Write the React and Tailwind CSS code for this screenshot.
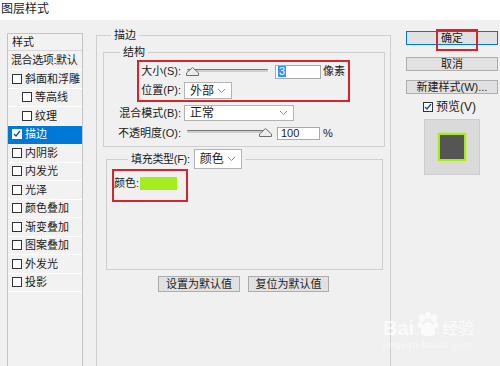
import React from "react";

// Photoshop "图层样式" dialog, 描边 (stroke) page.

const left = [
  { t: "斜面和浮雕", ind: false },
  { t: "等高线", ind: true },
  { t: "纹理", ind: true },
  { t: "描边", sel: true },
  { t: "内阴影" },
  { t: "内发光" },
  { t: "光泽" },
  { t: "颜色叠加" },
  { t: "渐变叠加" },
  { t: "图案叠加" },
  { t: "外发光" },
  { t: "投影" },
];

function Check({ on, light }) {
  return (
    <span
      className={
        "flex h-[10px] w-[10px] shrink-0 items-center justify-center border " +
        (light ? "border-white bg-white" : "border-[#333] bg-white")
      }
    >
      {on && (
        <svg width="8" height="8" viewBox="0 0 8 8">
          <polyline points="1,4 3,6 7,1" fill="none" stroke="#0a4f9e" strokeWidth="1.3" />
        </svg>
      )}
    </span>
  );
}

function Chevron() {
  return (
    <svg width="9" height="6" viewBox="0 0 9 6" className="shrink-0">
      <polyline points="1,1 4.5,4.5 8,1" fill="none" stroke="#8a8a8a" strokeWidth="1" />
    </svg>
  );
}

function Select({ w, h, text }) {
  return (
    <div
      className="flex items-center justify-between border border-[#b4b4b4] bg-white pl-[5px] pr-[5px]"
      style={{ width: w, height: h }}
    >
      <span className="text-[12px] leading-none">{text}</span>
      <Chevron />
    </div>
  );
}

function Slider({ at }) {
  // at: "start" | "end"
  return (
    <div className="relative h-full w-[88px] shrink-0">
      <div className="absolute left-[3px] right-[4px] top-[6px] h-[3px] rounded-[1px] border-t border-[#777] bg-[#cfcfcf]" />
      <svg
        width="13"
        height="9"
        viewBox="0 0 13 9"
        className={"absolute top-[4px] " + (at === "start" ? "left-[2px]" : "right-[0px]")}
      >
        <polygon points="0.5,8.5 0.5,6 6.5,0.5 12.5,6 12.5,8.5" fill="#ececec" stroke="#6d6d6d" />
      </svg>
    </div>
  );
}

function Btn({ children, w, primary }) {
  return (
    <div
      className={
        "flex h-[16px] items-center justify-center whitespace-nowrap border bg-[#e1e1e1] text-[11px] leading-none " +
        (primary ? "border-[#0078d7]" : "border-[#adadad]")
      }
      style={{ width: w }}
    >
      {children}
    </div>
  );
}

export default function App() {
  return (
    <div className="relative flex h-[366px] w-[500px] flex-col overflow-hidden whitespace-nowrap bg-[#f0f0f0] font-['Liberation_Sans','Noto_Sans_CJK_SC',sans-serif] text-[11px] text-[#1b1b1b]">
      <div className="h-[20px] shrink-0 bg-white pl-[1px] text-[12px] leading-[18px]">图层样式</div>

      <div className="flex min-h-0 flex-1">
        {/* style list */}
        <div className="ml-[7px] mt-[13px] h-[400px] w-[76px] shrink-0 overflow-hidden border border-[#c4c4c4] bg-[#f2f2f2]">
          <div className="flex h-[17px] items-center border-b border-[#d8d8d8] pl-[4px]">样式</div>
          <div className="flex h-[19px] items-center border-b border-white pl-[3px] tracking-[-0.4px]">混合选项:默认</div>
          {left.map((r) => (
            <div
              key={r.t}
              className={
                "flex h-[18.5px] items-center gap-[3px] border-b " +
                (r.sel ? "border-[#0078d7] bg-[#0078d7] text-white" : "border-white") +
                (r.ind ? " pl-[14px]" : " pl-[4px]")
              }
            >
              <Check on={r.sel} light={r.sel} />
              <span>{r.t}</span>
            </div>
          ))}
        </div>

        {/* main stroke group */}
        <fieldset className="ml-[13px] mt-[8px] h-[400px] w-[295px] shrink-0 border border-[#cfcfcf]">
          <legend className="ml-[14px] px-[3px] text-[11px] leading-[14px]">描边</legend>

          <fieldset className="ml-[6px] mr-[5px] mt-[3px] border border-[#cfcfcf] pb-[3px]">
            <legend className="ml-[16px] px-[3px] leading-[14px]">结构</legend>

            <div className="ml-[33px] mt-[1px] w-[213px] border-2 border-[#d2262e]">
              <div className="flex h-[19px] items-center">
                <span className="w-[42px] text-right">大小(S):</span>
                <div className="ml-[3px] h-full pt-[1px]">
                  <Slider at="start" />
                </div>
                <div className="ml-[3px] flex h-[14px] w-[46px] items-center border border-[#a9a9a9] bg-white pl-[2px]">
                  <span className="bg-[#3390ff] px-[1px] leading-[11px] text-white">3</span>
                </div>
                <span className="ml-[2px]">像素</span>
              </div>
              <div className="flex h-[19px] items-center">
                <span className="w-[42px] text-right">位置(P):</span>
                <div className="ml-[3px]">
                  <Select w={48} h={17} text="外部" />
                </div>
              </div>
            </div>

            <div className="mt-[1px] flex h-[20px] items-center">
              <span className="w-[77px] text-right">混合模式(B):</span>
              <div className="ml-[3px]">
                <Select w={110} h={16} text="正常" />
              </div>
            </div>
            <div className="flex h-[20px] items-center">
              <span className="w-[77px] text-right">不透明度(O):</span>
              <div className="ml-[3px] -mt-[4px] h-[14px]">
                <Slider at="end" />
              </div>
              <div className="ml-[5px] flex h-[13px] w-[43px] items-center border border-[#a9a9a9] bg-white pl-[3px]">
                100
              </div>
              <span className="ml-[3px]">%</span>
            </div>
          </fieldset>

          <fieldset className="ml-[9px] mr-[7px] mt-[2px] h-[121px] border border-[#cfcfcf]">
            <legend className="ml-[21px] px-[3px]">
              <div className="flex items-center">
                <span className="tracking-[-0.3px]">填充类型(F):</span>
                <div className="ml-[4px]">
                  <Select w={48} h={20} text="颜色" />
                </div>
              </div>
            </legend>
            <div className="ml-[5px] flex h-[33px] w-[76px] items-start border-2 border-[#d2262e] pt-[5px]">
              <span className="leading-[14px]">颜色:</span>
              <span className="ml-[1px] mt-[1px] h-[13px] w-[37px] bg-[#a3ec1d]" />
            </div>
          </fieldset>

          <div className="mt-[6px] flex justify-center gap-[8px]">
            <Btn w={82}>设置为默认值</Btn>
            <Btn w={81}>复位为默认值</Btn>
          </div>
        </fieldset>

        {/* right column */}
        <div className="ml-[15px] mt-[11px] flex w-[92px] shrink-0 flex-col">
          <div className="relative">
            <div className="flex h-[14px] items-center justify-center border border-[#0078d7] bg-[#e1e1e1] leading-none">确定</div>
            <div className="absolute left-[30px] top-[-2px] h-[22px] w-[42px] border-2 border-[#d2262e]" />
          </div>
          <div className="mt-[12px] flex h-[14px] items-center justify-center border border-[#adadad] bg-[#e1e1e1] leading-none">取消</div>
          <div className="mt-[9px] flex h-[14px] items-center justify-center border border-[#adadad] bg-[#e1e1e1] leading-none">新建样式(W)...</div>
          <div className="ml-[17px] mt-[7px] flex h-[12px] items-center gap-[3px]">
            <Check on />
            <span className="text-[12px]">预览(V)</span>
          </div>
          <div className="ml-[18px] mt-[6px] flex h-[56px] w-[56px] items-center justify-center border border-[#cdcdcd] bg-[#dadada]">
            <div className="h-[28px] w-[28px] border-2 border-[#a6ea1c] bg-[#555555] shadow-[0_0_3px_#c8f25a]" />
          </div>
        </div>
      </div>

      {/* watermark */}
      <div className="pointer-events-none absolute left-[383px] top-[312px] flex flex-col items-start text-white/70">
        <div className="flex items-end">
          <span className="font-['Liberation_Sans',sans-serif] text-[20px] font-bold leading-[20px]">Bai</span>
          <svg width="24" height="26" viewBox="0 0 24 26" className="mx-[2px]">
            <g fill="rgba(255,255,255,0.75)">
              <ellipse cx="6" cy="6" rx="3" ry="4" />
              <ellipse cx="12" cy="3.5" rx="3" ry="3.5" />
              <ellipse cx="18" cy="6" rx="3" ry="4" />
              <ellipse cx="4" cy="13" rx="2.5" ry="3" />
              <ellipse cx="20" cy="13" rx="2.5" ry="3" />
              <path d="M12 10 C7 10 4 17 5 21 C6 25 18 25 19 21 C20 17 17 10 12 10 Z" />
            </g>
          </svg>
          <span className="text-[16px] leading-[18px]">经验</span>
        </div>
        <span className="mt-[2px] text-[9px] leading-[10px] tracking-[1px] text-white/50">jingyan.baidu.com</span>
      </div>
    </div>
  );
}
